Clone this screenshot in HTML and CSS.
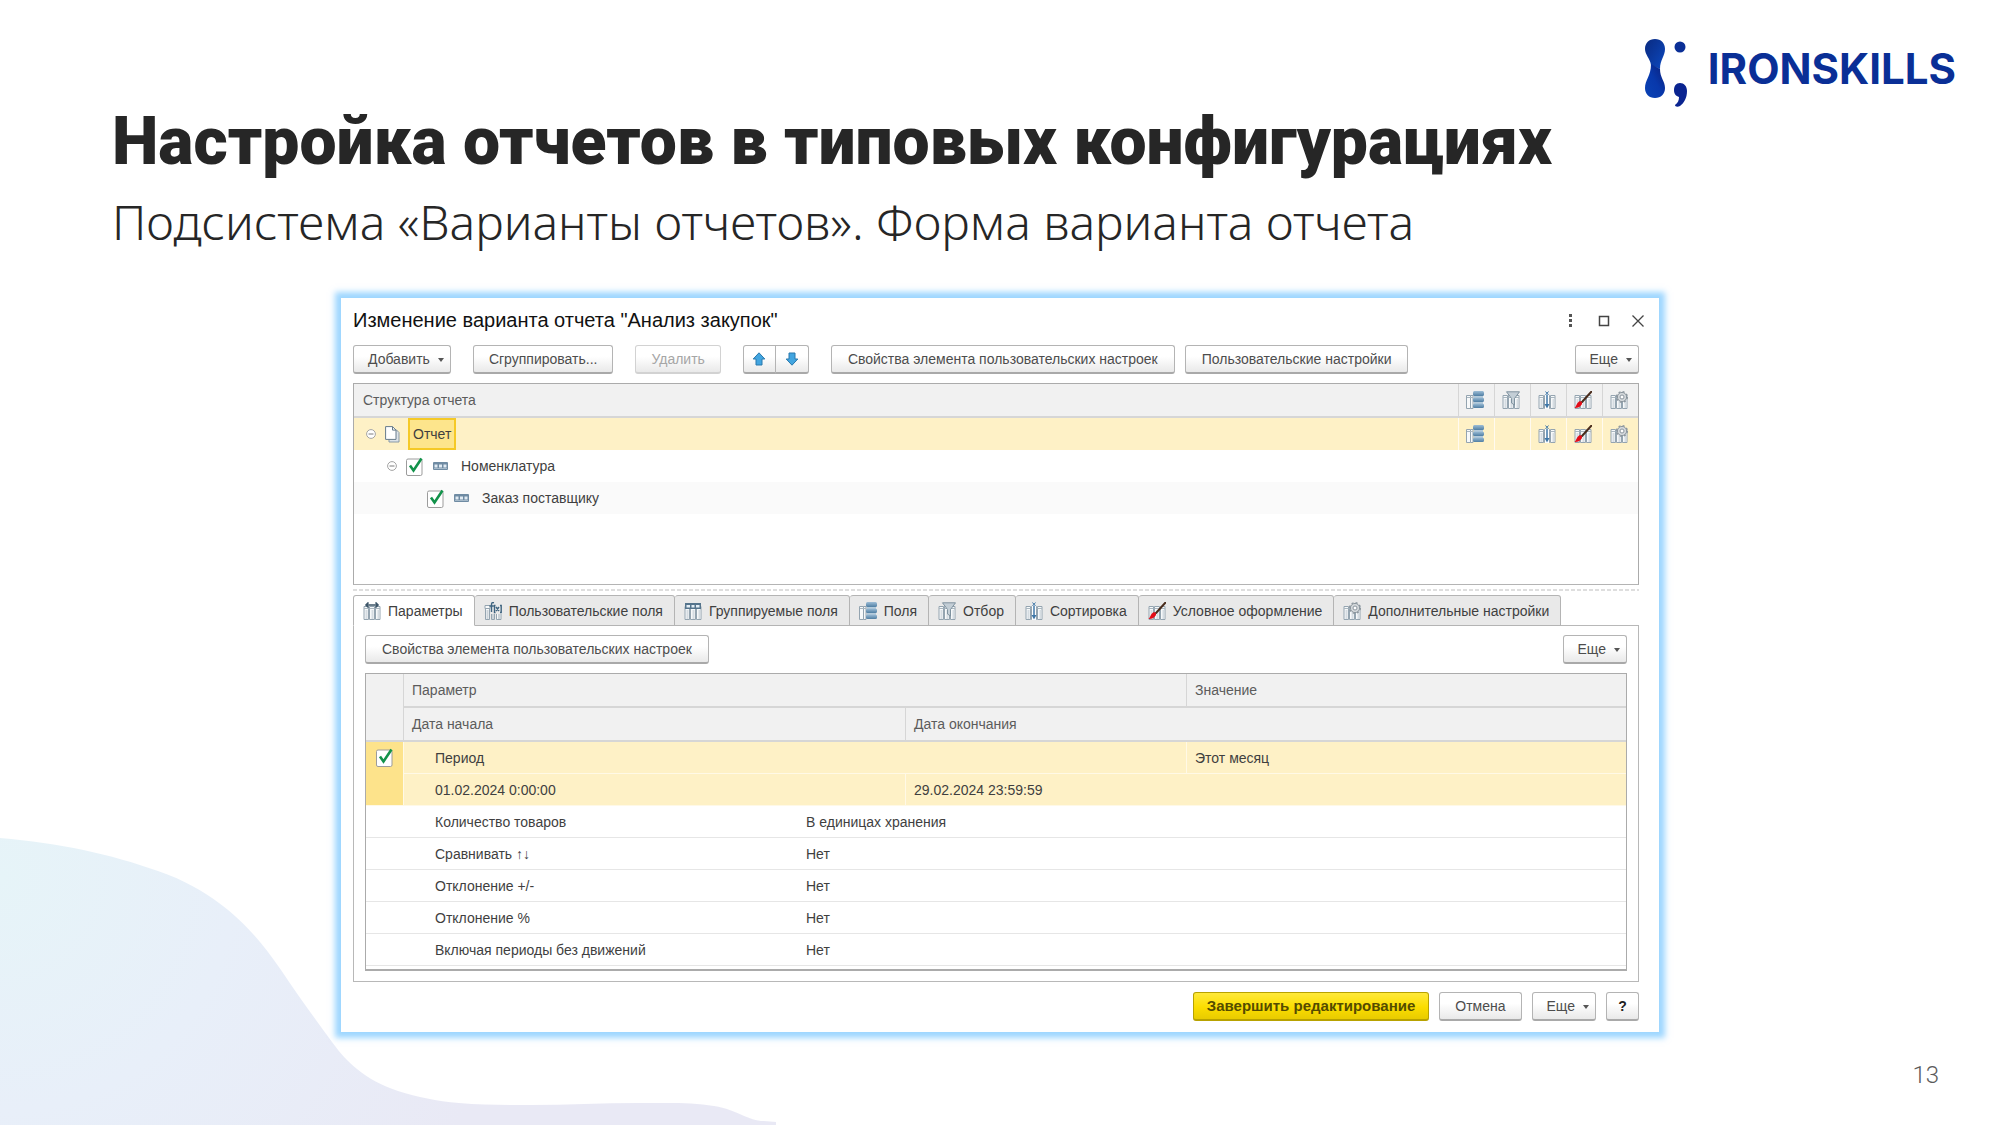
FILE: index.html
```html
<!DOCTYPE html>
<html lang="ru">
<head>
<meta charset="utf-8">
<title>Настройка отчетов в типовых конфигурациях</title>
<link rel="stylesheet" href="styles.css">
</head>
<body>
<svg class="sprite" aria-hidden="true">
  <defs>
    <linearGradient id="bars" x1="0" y1="0" x2="0" y2="1"><stop offset="0" stop-color="#9dbdd6"/><stop offset="1" stop-color="#4f7ea3"/></linearGradient>
    <symbol id="i-table" viewBox="0 0 18 18">
      <path d="M1 4.500h4.500v13H1zM6.500 4.500h5v13h-5zM12.500 4.500H17v13h-4.500z" fill="#f7f9fa" stroke="#94a4b0"/>
      <path d="M1 6.500h4.500M6.500 6.500h5M12.500 6.500H17" stroke="#aab7c0"/>
      <path d="M3.500 8v9M9.500 8v9M15.500 8v9" stroke="#d5dce1" stroke-width="2"/>
    </symbol>
    <symbol id="i-params" viewBox="0 0 18 18">
      <use href="#i-table"/>
      <path d="M3 3h12M5.500.5 3 3l2.500 2.500M12.500.5 15 3l-2.500 2.500" fill="none" stroke="#3c5568" stroke-width="1.600"/>
    </symbol>
    <symbol id="i-func" viewBox="0 0 18 18">
      <path d="M1 3.500h5v3H1zM1.500 6.500v11h4v-11M7.500 12v5.500h3V12M12.500 12v5.500h4.500V12" fill="#f7f9fa" stroke="#94a4b0"/>
      <path d="M3.500 8v9M9 12v5M15 12v5" stroke="#cbd3d9" stroke-width="2"/>
      <path d="M10 .7C7.500.2 7.500 1.500 7.500 3v7M5.500 4h4.200M11.500 3.500h-1v7h1M16 3.500h1.200v7H16M12 5l3 4M15 5l-3 4" fill="none" stroke="#3f6480" stroke-width="1.400"/>
    </symbol>
    <symbol id="i-group" viewBox="0 0 18 18">
      <use href="#i-table"/>
      <path d="M1 1h16v6H1z" fill="#55748c"/>
      <path d="M2.500 3h3.500v2.500H2.500zM7.500 3h3v2.500h-3zM12 3h3.500v2.500H12z" fill="#e4eef5"/>
    </symbol>
    <symbol id="i-fields" viewBox="0 0 18 18">
      <path d="M.5 4.500h4v13h-4zM4.500 4.500H7v13H4.500" fill="#f7f9fa" stroke="#94a4b0"/>
      <path d="M1 6.500h6" stroke="#aab7c0"/>
      <rect x="8" y="0" width="9" height="17" fill="#b5cbdb"/>
      <rect x="7" y="0" width="11" height="5" rx="1.500" fill="url(#bars)"/>
      <rect x="7" y="6.500" width="11" height="4.500" rx="1.500" fill="url(#bars)"/>
      <rect x="7" y="12.500" width="11" height="4.500" rx="1.500" fill="url(#bars)"/>
    </symbol>
    <symbol id="i-filter" viewBox="0 0 18 18">
      <use href="#i-table"/>
      <path d="M4.500.8h13l-5 6.700V14L9.500 12V7.500z" fill="#c3ced6" stroke="#7f929f"/>
    </symbol>
    <symbol id="i-sort" viewBox="0 0 18 18">
      <use href="#i-table"/>
      <path d="M7 4h4v14H7z" fill="#fff"/>
      <path d="M9 4v11" stroke="#3f77a8" stroke-width="1.500"/>
      <path d="M7.500.5l3 3.500M10.500.5l-3 3.500" stroke="#3f77a8"/>
      <path d="M6.500 13h5L9 17.500z" fill="#3f77a8"/>
    </symbol>
    <symbol id="i-brush" viewBox="0 0 18 18">
      <use href="#i-table"/>
      <path d="M17.500.5 8 11" stroke="#4a2c1c" stroke-width="2" stroke-linecap="round"/>
      <path d="M5 10.500c2-1 4 1 2.600 3.200C6.300 15.800 3 17.300.5 17c2-1.500 2-5 4.500-6.500z" fill="#e30b17"/>
    </symbol>
    <symbol id="i-gear" viewBox="0 0 18 18">
      <use href="#i-table"/>
      <circle cx="12" cy="6" r="5.300" fill="none" stroke="#8c969e" stroke-width="1.400" stroke-dasharray="2 2.160"/>
      <circle cx="12" cy="6" r="4.600" fill="#d3d7da" stroke="#8c969e"/>
      <circle cx="12" cy="6" r="2" fill="#fff" stroke="#8c969e"/>
    </symbol>
    <symbol id="i-doc" viewBox="0 0 15 17">
      <path d="M4 3.500h7l3 3v9.500H4z" fill="#dde3e8" stroke="#8999a6"/>
      <path d="M.6.6h6.900l3.500 3.500v9.300H.6z" fill="#fff" stroke="#667a8a"/>
      <path d="M7.500.6v3.500H11" fill="none" stroke="#667a8a"/>
    </symbol>
    <symbol id="i-item" viewBox="0 0 15 8">
      <rect width="15" height="8" rx="1" fill="#6f8ba3"/>
      <path d="M1.500 2.500h3v3h-3zM6 2.500h3v3H6zM10.500 2.500h3v3h-3z" fill="#e1ebf3"/>
      <path d="M1 6.500h13" stroke="#a5b9c9"/>
    </symbol>
    <symbol id="i-minus" viewBox="0 0 10 10">
      <circle cx="5" cy="5" r="4.400" fill="#fff" stroke="#a3a3a3"/>
      <path d="M2.500 5h5" stroke="#7d7d7d"/>
    </symbol>
    <symbol id="i-up" viewBox="0 0 14 14">
      <path d="M7 .8 12.800 7H10v6H4V7H1.200z" fill="#42a5e0" stroke="#2979ad" stroke-linejoin="round"/>
    </symbol>
  </defs>
</svg>

<main class="slide">
  <svg class="blob" viewBox="0 0 776 288" aria-hidden="true">
    <defs>
      <radialGradient id="wash" gradientUnits="userSpaceOnUse" cx="0" cy="40" r="520">
        <stop offset="0" stop-color="#e6f4f8"/><stop offset=".45" stop-color="#e8eff9"/><stop offset="1" stop-color="#e9e9f5"/>
      </radialGradient>
    </defs>
    <path fill="url(#wash)" d="M0 1C60 6 110 17 158 34C184 43 203 54 219 66C245 85 263 107 281 133C299 160 316 183 332 205C341 217 347 224 357 232C369 242 381 248 398 254C418 260 436 264 459 266C483 268 507 268 531 268C567 268 602 266 638 266C667 266 692 265 714 269C738 273 748 284 764 284L776 285V288H0z"/>
  </svg>

  <header class="masthead">
    <div class="headings">
      <h1 class="title">Настройка отчетов в типовых конфигурациях</h1>
      <p class="subtitle">Подсистема «Варианты отчетов». Форма варианта отчета</p>
    </div>
    <div class="brand">
      <svg class="brand-mark" viewBox="0 0 44 70" aria-hidden="true">
        <defs>
          <linearGradient id="m1" x1="0" y1="0" x2="1" y2="1"><stop offset="0" stop-color="#0a2a80"/><stop offset="1" stop-color="#0c49c0"/></linearGradient>
          <linearGradient id="m2" x1="1" y1="0" x2="0" y2="1"><stop offset="0" stop-color="#0a1d78"/><stop offset=".5" stop-color="#0838ab"/><stop offset="1" stop-color="#0a43b5"/></linearGradient>
        </defs>
        <path d="M1 11C1 5 5 1 11 1s10 4 10 10c0 7-5 11-5 20L7 27C6 20 1 17 1 11z" fill="url(#m1)"/>
        <path d="M7 26l9 5c0 9 5 12 5 19 0 6-4 10-10 10S1 56 1 50c0-8 6-12 6-24z" fill="url(#m2)"/>
        <circle cx="36" cy="9" r="5.500" fill="#0a2f96"/>
        <path d="M36 45c4 0 7 3 7 8 0 7-3 12-7 15-2 1-5 1-5-1 3-2 4-5 4-8-3-1-5-3-5-7s2-7 6-7z" fill="#0a2490"/>
      </svg>
      <span class="brand-name">IRONSKILLS</span>
    </div>
  </header>

  <section class="dialog" aria-label="Изменение варианта отчета">
    <div class="dialog-head">
      <h2 class="dialog-title">Изменение варианта отчета "Анализ закупок"</h2>
      <div class="window-tools">
        <button class="tool" aria-label="Меню"><svg width="12" height="14" viewBox="0 0 12 14"><path d="M5 0h3v3H5zM5 5h3v3H5zM5 10h3v3H5z" fill="#555"/></svg></button>
        <button class="tool" aria-label="Развернуть"><svg width="12" height="12" viewBox="0 0 12 12"><path d="M1.500 1.500h9v9h-9z" fill="none" stroke="#444" stroke-width="1.500"/></svg></button>
        <button class="tool" aria-label="Закрыть"><svg width="12" height="12" viewBox="0 0 12 12"><path d="M.5.5l11 11M11.500.5l-11 11" stroke="#444" stroke-width="1.300"/></svg></button>
      </div>
    </div>

    <div class="toolbar">
      <button class="btn btn-menu">Добавить</button>
      <button class="btn">Сгруппировать...</button>
      <button class="btn" disabled>Удалить</button>
      <div class="pair">
        <button class="btn btn-icon" aria-label="Вверх"><svg width="14" height="14"><use href="#i-up"/></svg></button>
        <button class="btn btn-icon" aria-label="Вниз"><svg class="flip" width="14" height="14"><use href="#i-up"/></svg></button>
      </div>
      <div class="set">
        <button class="btn btn-wide">Свойства элемента пользовательских настроек</button>
        <button class="btn btn-wide">Пользовательские настройки</button>
      </div>
      <button class="btn btn-menu push">Еще</button>
    </div>

    <div class="tree">
      <table class="tree-table">
        <colgroup><col><col class="c-icon"><col class="c-icon"><col class="c-icon"><col class="c-icon"><col class="c-icon"></colgroup>
        <thead>
          <tr>
            <th>Структура отчета</th>
            <th class="ic"><svg class="icon"><use href="#i-fields"/></svg></th>
            <th class="ic"><svg class="icon"><use href="#i-filter"/></svg></th>
            <th class="ic"><svg class="icon"><use href="#i-sort"/></svg></th>
            <th class="ic"><svg class="icon"><use href="#i-brush"/></svg></th>
            <th class="ic"><svg class="icon"><use href="#i-gear"/></svg></th>
          </tr>
        </thead>
        <tbody>
          <tr class="current">
            <td><div class="node"><svg class="minus"><use href="#i-minus"/></svg><svg class="doc"><use href="#i-doc"/></svg><span class="picked">Отчет</span></div></td>
            <td class="ic"><svg class="icon"><use href="#i-fields"/></svg></td>
            <td class="ic"></td>
            <td class="ic"><svg class="icon"><use href="#i-sort"/></svg></td>
            <td class="ic"><svg class="icon"><use href="#i-brush"/></svg></td>
            <td class="ic"><svg class="icon"><use href="#i-gear"/></svg></td>
          </tr>
          <tr>
            <td colspan="6"><div class="node level-2"><svg class="minus"><use href="#i-minus"/></svg><input class="check" type="checkbox" id="n1" checked><svg class="item"><use href="#i-item"/></svg><label for="n1">Номенклатура</label></div></td>
          </tr>
          <tr class="odd">
            <td colspan="6"><div class="node level-3"><input class="check" type="checkbox" id="n2" checked><svg class="item"><use href="#i-item"/></svg><label for="n2">Заказ поставщику</label></div></td>
          </tr>
        </tbody>
      </table>
    </div>

    <div class="splitter"></div>

    <div class="tabs" role="tablist">
      <button class="tab active" role="tab" aria-selected="true"><svg class="icon"><use href="#i-params"/></svg>Параметры</button>
      <button class="tab" role="tab"><svg class="icon"><use href="#i-func"/></svg>Пользовательские поля</button>
      <button class="tab" role="tab"><svg class="icon"><use href="#i-group"/></svg>Группируемые поля</button>
      <button class="tab" role="tab"><svg class="icon"><use href="#i-fields"/></svg>Поля</button>
      <button class="tab" role="tab"><svg class="icon"><use href="#i-filter"/></svg>Отбор</button>
      <button class="tab" role="tab"><svg class="icon"><use href="#i-sort"/></svg>Сортировка</button>
      <button class="tab" role="tab"><svg class="icon"><use href="#i-brush"/></svg>Условное оформление</button>
      <button class="tab" role="tab"><svg class="icon"><use href="#i-gear"/></svg>Дополнительные настройки</button>
    </div>

    <div class="panel" role="tabpanel">
      <div class="toolbar">
        <button class="btn btn-wide">Свойства элемента пользовательских настроек</button>
        <button class="btn btn-menu push">Еще</button>
      </div>
      <div class="grid">
        <table class="params">
          <colgroup><col class="p-mark"><col class="p-name"><col class="p-gap"><col class="p-end"><col></colgroup>
          <thead>
            <tr><th rowspan="2"></th><th colspan="3">Параметр</th><th>Значение</th></tr>
            <tr><th colspan="2">Дата начала</th><th colspan="2">Дата окончания</th></tr>
          </thead>
          <tbody>
            <tr class="current"><td class="mark" rowspan="2"><input class="check" type="checkbox" aria-label="Период" checked></td><td class="name" colspan="3">Период</td><td>Этот месяц</td></tr>
            <tr class="current"><td class="name" colspan="2">01.02.2024 0:00:00</td><td colspan="2">29.02.2024 23:59:59</td></tr>
            <tr><td></td><td class="name">Количество товаров</td><td colspan="3">В единицах хранения</td></tr>
            <tr><td></td><td class="name">Сравнивать ↑↓</td><td colspan="3">Нет</td></tr>
            <tr><td></td><td class="name">Отклонение +/-</td><td colspan="3">Нет</td></tr>
            <tr><td></td><td class="name">Отклонение %</td><td colspan="3">Нет</td></tr>
            <tr><td></td><td class="name">Включая периоды без движений</td><td colspan="3">Нет</td></tr>
          </tbody>
        </table>
      </div>
    </div>

    <div class="actions">
      <button class="btn btn-primary">Завершить редактирование</button>
      <button class="btn">Отмена</button>
      <button class="btn btn-menu">Еще</button>
      <button class="btn btn-help">?</button>
    </div>
  </section>

  <footer class="page-number">13</footer>
</main>
</body>
</html>
```
FILE: styles.css
```css
* { box-sizing: border-box; }

body {
  margin: 0;
  background: #fff;
  color: #262626;
  font-family: "Liberation Sans", Arial, sans-serif;
}

.sprite { position: absolute; width: 0; height: 0; }

.slide {
  position: relative;
  display: flex;
  flex-direction: column;
  min-height: 100vh;
}

.blob {
  position: absolute;
  left: 0;
  bottom: 0;
  width: 776px;
  height: 288px;
}

.masthead {
  position: relative;
  padding: 102px 44px 0 112px;
}

.title {
  margin: 0;
  font: 900 66px/80px Roboto, sans-serif;
  white-space: nowrap;
}

.subtitle {
  margin: 8px 0 0;
  font: 300 48px/64px "Noto Sans", sans-serif;
  white-space: nowrap;
}

.brand {
  display: flex;
  gap: 20px;
  position: absolute;
  top: 38px;
  right: 44px;
}

.brand-mark { width: 44px; height: 70px; }

.brand-name {
  color: #0a2f96;
  font: 700 42px/62px "Inter", sans-serif;
}

/* dialog window */
.dialog {
  position: relative;
  width: 100%;
  max-width: 1318px;
  margin: 44px auto 0;
  padding: 0 20px 11px 12px;
  background: #fff;
  box-shadow: 0 0 6px 6px rgba(80, 182, 255, .56);
  color: #3f3f3f;
  font-size: 14px;
}

.dialog-head {
  display: flex;
  justify-content: space-between;
  align-items: center;
  height: 47px;
  padding-bottom: 2px;
}

.dialog-title {
  margin: 0;
  color: #111;
  font-size: 20px;
  font-weight: 400;
}

.window-tools {
  display: flex;
  align-items: center;
  gap: 22px;
  margin-right: -5px;
}

.tool {
  display: flex;
  padding: 0;
  border: 0;
  background: none;
}

.toolbar { display: flex; gap: 22px; }

.btn {
  height: 29px;
  padding: 0 15px;
  border: 1px solid #b4b4b4;
  border-bottom: 2px solid #a9a9a9;
  border-radius: 3px;
  background: linear-gradient(#fff 40%, #e9e9e9);
  color: #4d4d4d;
  font: 14px/26px "Liberation Sans", Arial, sans-serif;
  white-space: nowrap;
}

.btn:disabled { border-color: #d2d2d2; color: #a6a6a6; }

.btn-menu { padding: 0 14px; }

.btn-menu::after {
  content: "";
  display: inline-block;
  margin: 0 -8px 2px 8px;
  border: 3px solid transparent;
  border-top: 4px solid #555;
  border-bottom: 0;
}

.btn-wide { padding: 0 16px; }
.push { margin-left: auto; }
.pair { display: flex; }
.set { display: flex; gap: 10px; }
.btn-icon { width: 33px; padding: 0; line-height: 0; }
.btn-icon:first-child { border-radius: 3px 0 0 3px; }
.btn-icon:last-child { width: 34px; margin-left: -1px; border-radius: 0 3px 3px 0; }
.flip { transform: rotate(180deg); }

.icon { display: block; flex: none; width: 18px; height: 18px; }

/* structure tree */
.tree {
  min-height: 202px;
  margin-top: 9px;
  border: 1px solid #ababab;
  border-bottom-color: #b4b4b4;
}

.tree-table,
.params {
  width: 100%;
  border-collapse: separate;
  border-spacing: 0;
  table-layout: fixed;
}

th {
  height: 34px;
  padding: 0 9px;
  border-bottom: 2px solid #d6d6d6;
  background: #f1f1f1;
  color: #5c5c5c;
  font-weight: 400;
  text-align: left;
}

.tree-table td { height: 32px; padding: 0; }
.c-icon { width: 36px; }
.tree-table .ic { padding: 0 0 0 7px; border-left: 1px solid #d6d6d6; }
.tree-table td.ic { border-color: #fffaf0; }
.current td { background: #fef1c6; }
.odd td { background: #fafafa; }

.node {
  display: flex;
  align-items: center;
  height: 32px;
  padding-left: 12px;
}

.minus { flex: none; width: 10px; height: 10px; margin-right: 9px; }
.doc { flex: none; width: 15px; height: 17px; margin-right: 8px; }
.item { flex: none; width: 15px; height: 8px; margin: 0 13px 0 10px; }
.level-2 { padding-left: 33px; }
.level-3 { padding-left: 73px; }

.picked {
  padding: 0 3px;
  border: 2px solid #f5c926;
  background: #fde58c;
  line-height: 28px;
}

.check {
  appearance: none;
  flex: none;
  width: 17px;
  height: 19px;
  margin: 0;
  background: url("data:image/svg+xml,%3Csvg xmlns='http://www.w3.org/2000/svg' viewBox='0 0 17 19'%3E%3Crect x='.5' y='2' width='15.500' height='16.500' rx='1.500' fill='%23fff' stroke='%239c9c9c'/%3E%3Cpath d='M4 8.500l3.500 5L15.500 1.500' fill='none' stroke='%2312924a' stroke-width='2.600'/%3E%3C/svg%3E") no-repeat;
}

.splitter {
  height: 10px;
  background: repeating-linear-gradient(90deg, #dedede 0 4px, transparent 4px 6px) 0 4px / 100% 2px no-repeat;
}

/* settings tabs */
.tabs {
  position: relative;
  z-index: 1;
  display: flex;
}

.tab {
  display: flex;
  align-items: center;
  gap: 7px;
  height: 31px;
  padding: 0 11px 0 9px;
  border: 1px solid #b4b4b4;
  border-left-width: 0;
  border-radius: 3px 3px 0 0;
  background: #e9e9e9;
  color: #3f3f3f;
  font: 14px/28px "Liberation Sans", Arial, sans-serif;
  white-space: nowrap;
}

.tab.active {
  border-left-width: 1px;
  border-bottom-color: #fff;
  background: #fff;
}

.panel {
  margin-top: -1px;
  padding: 9px 11px 10px;
  border: 1px solid #b8b8b8;
}

.grid {
  min-height: 298px;
  margin-top: 9px;
  border: 1px solid #ababab;
  border-bottom-width: 2px;
}

.p-mark { width: 37px; }
.p-name { width: 394px; }
.p-gap { width: 108px; }
.p-end { width: 281px; }

.params th { padding-left: 8px; }
.params th + th,
.params tr + tr th { border-left: 1px solid #d6d6d6; }

.params td {
  height: 32px;
  padding: 0 9px;
  border-bottom: 1px solid #e6e6e6;
}

.params .name { padding-left: 32px; }
.params .current td { border-bottom-color: #fff9e6; }
.params .current td + td,
.params .current + .current td { padding-left: 8px; border-left: 1px solid #fff9e6; }
.params .current .name.name { padding-left: 31px; }
.params .current .mark { padding: 6px 10px 0; background: #fde38b; vertical-align: top; }

.actions {
  display: flex;
  justify-content: flex-end;
  gap: 10px;
  margin-top: 10px;
}

.btn-primary {
  padding: 0 13px;
  border-color: #b8a200;
  background: linear-gradient(#ffe93a, #fbdd00 55%, #e8cb00);
  color: #544b00;
  font-size: 15px;
  font-weight: 700;
}

.btn-help { width: 33px; padding: 0; color: #222; font-weight: 700; }

.page-number {
  position: absolute;
  right: 61px;
  bottom: 34px;
  color: #5b5b5b;
  font: 300 24px/32px Roboto, sans-serif;
}
```
